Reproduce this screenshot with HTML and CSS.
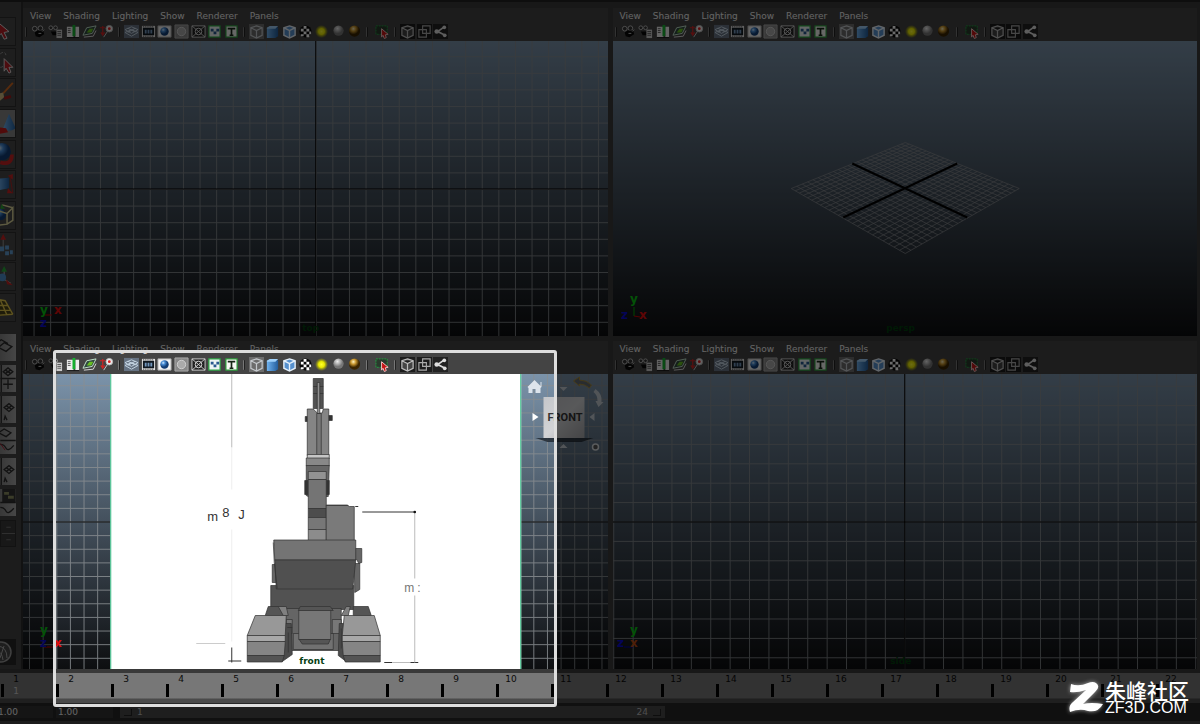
FILE: index.html
```html
<!DOCTYPE html>
<html lang="en">
<head>
<meta charset="utf-8">
<title>Four view layout</title>
<link rel="stylesheet" href="styles.css">
</head>
<body>
<svg class="defs" aria-hidden="true">
  <defs>
    <linearGradient id="blue" x2="1" y2="0"><stop offset="0" stop-color="#6fb2ef"/><stop offset="1" stop-color="#225c9b"/></linearGradient>
    <radialGradient id="ballBlue" cx=".35" cy=".3"><stop offset="0" stop-color="#d5ecff"/><stop offset=".4" stop-color="#4a8fd8"/><stop offset="1" stop-color="#123d75"/></radialGradient>
    <radialGradient id="ballGrey" cx=".4" cy=".3"><stop offset="0" stop-color="#eee"/><stop offset="1" stop-color="#777"/></radialGradient>
    <radialGradient id="ballGold" cx=".4" cy=".3"><stop offset="0" stop-color="#fff2c0"/><stop offset=".45" stop-color="#c8962e"/><stop offset="1" stop-color="#3a2400"/></radialGradient>
    <radialGradient id="glow"><stop offset="0" stop-color="#ffff30"/><stop offset=".45" stop-color="#e8e800"/><stop offset="1" stop-color="#b0b000" stop-opacity="0"/></radialGradient>
    <linearGradient id="face" x2="1" y2="1"><stop offset="0" stop-color="#c4c6ca"/><stop offset=".5" stop-color="#d2d3d6"/><stop offset="1" stop-color="#a4a5a8"/></linearGradient>
    <pattern id="gridTop" width="16.6" height="16.6" patternUnits="userSpaceOnUse"><path d="M0 .5H17M.5 0V17" class="grid"/></pattern>
    <pattern id="gridFront" width="13.63" height="13.63" patternUnits="userSpaceOnUse"><path d="M0 .5H14M.5 0V14" class="grid"/></pattern>
    <pattern id="gridSide" width="19.4" height="19.4" patternUnits="userSpaceOnUse"><path d="M0 .5H20M.5 0V20" class="grid"/></pattern>
  </defs>
  <symbol id="i-cam" viewBox="0 0 16 16"><circle cx="4" cy="5" r="2.5" fill="#333" stroke="#bbb"/><circle cx="10" cy="4.500" r="2.500" fill="#333" stroke="#bbb"/><path d="M4 9l3-2h6l1 4-5 3-4-1z" fill="#080808"/><path d="M8 10h3M12 8l2-2" stroke="#ccc"/></symbol>
  <symbol id="i-camlist" viewBox="0 0 16 16"><circle cx="3" cy="4" r="2" fill="#333" stroke="#bbb"/><circle cx="8" cy="4" r="2" fill="#333" stroke="#bbb"/><path d="M3 8h6v4H5z" fill="#080808"/><path d="M9 6h6v9H9z" fill="#ccc"/><path d="M10 8h4M10 10h4M10 12h4" stroke="#555"/></symbol>
  <symbol id="i-book" viewBox="0 0 16 16"><path d="M2 3h7v11H2zM11 3h4v11h-4z" fill="#eee"/><path d="M3 5h3M3 7h3M3 9h3" stroke="#555"/><path d="M8 1h3v12H8z" fill="#16b030"/><path d="M2 14.500h13" stroke="#111"/></symbol>
  <symbol id="i-plane" viewBox="0 0 16 16"><path d="M1 12L5 4l10-2-4 8z" fill="#304a40" stroke="#c8e8d0"/><path d="M2 14l10-1 3-6" fill="none" stroke="#ddd"/><path d="M5 9l3-4h4l-2 4z" fill="#68c020"/></symbol>
  <symbol id="i-pan" viewBox="0 0 16 16"><path d="M4 2v9M1 4h6M2 9l2 3 2-3" fill="none" stroke="#d02222" stroke-width="1.300"/><circle cx="11" cy="5" r="3.500" fill="#eee" stroke="#bbb"/><circle cx="11" cy="5" r="1.500" fill="#d22"/><path d="M9 8l-4 6" stroke="#ccc"/></symbol>
  <symbol id="i-grid" viewBox="0 0 16 16"><path d="M0 1h16v14H0z" fill="#667383"/><path d="M1 6l7-3 7 3-7 4zM1 9l7-3 7 3-7 4zM4 4.500l8 4M12 4.500L4 9" fill="none" stroke="#c8d8e5"/></symbol>
  <symbol id="i-film" viewBox="0 0 16 16"><path d="M1 2h14v12H1z" fill="#e6e6e6"/><path d="M2 4h12v8H2z" fill="#101820"/><path d="M4 6h2v4H4zM7 6h2v4H7zM10 6h2v4h-2z" fill="#7296bc"/><path d="M2 3h12M2 13h12" stroke="#222" stroke-dasharray="1 1"/></symbol>
  <symbol id="i-res" viewBox="0 0 16 16"><path d="M1 2h14v12H1z" fill="#f4f4f4" stroke="#aaa"/><circle cx="8" cy="8" r="4.500" fill="url(#ballBlue)"/></symbol>
  <symbol id="i-mask" viewBox="0 0 16 16"><path d="M1 1h14v14H1z" fill="#888" stroke="#aaa"/><circle cx="8" cy="8" r="4.500" fill="#aaa" stroke="#d0d0d0"/></symbol>
  <symbol id="i-field" viewBox="0 0 16 16"><path d="M1 2h14v12H1z" fill="#222" stroke="#ccc"/><path d="M1 2l14 12M15 2L1 14" stroke="#ccc"/><circle cx="8" cy="8" r="3.500" fill="none" stroke="#ddd"/></symbol>
  <symbol id="i-safe" viewBox="0 0 16 16"><path d="M2 2h12v12H2z" fill="#edf4f4" stroke="#2aa342" stroke-width="1.300"/><path d="M4 5h3v3H4zM7 8h3v3H7zM10 5h3v3h-3z" fill="#28598f"/></symbol>
  <symbol id="i-title" viewBox="0 0 16 16"><path d="M2 2h12v12H2z" fill="#f6f8f4" stroke="#2a9838" stroke-width="1.300"/><path d="M4 5h8M8 5v7M6 12h4" stroke="#152515" stroke-width="1.800"/></symbol>
  <symbol id="i-wire" viewBox="0 0 16 16"><path d="M0 0h16v16H0z" fill="#777" opacity=".8"/><path d="M8 2l6 2v8l-6 3-6-3V4zM2 4l6 3 6-3M8 7v8" fill="none" stroke="#c4c8cc" stroke-width="1.300"/></symbol>
  <symbol id="i-solid" viewBox="0 0 16 16"><path d="M2 4l9-2 3 2v9l-3 2H2z" fill="url(#blue)"/><path d="M2 4l3-2h9l-3 3H2z" fill="#9fd0fa"/></symbol>
  <symbol id="i-wiresolid" viewBox="0 0 16 16"><path d="M8 2l6 2v8l-6 3-6-3V4z" fill="#5691cf" stroke="#e6f1fb" stroke-width="1.500"/><path d="M2 4l6 3 6-3M8 7v8" fill="none" stroke="#e6f1fb" stroke-width="1.500"/></symbol>
  <symbol id="i-check" viewBox="0 0 16 16"><circle cx="8" cy="8" r="6.500" fill="#070707"/><path d="M6 2h3v3H6zM3 5h3v3H3zM9 5h3v3H9zM6 8h3v3H6zM12 8h2v3h-2zM3 11h3v2H3zM9 11h3v3H9z" fill="#fff"/></symbol>
  <symbol id="i-light" viewBox="0 0 16 16"><circle cx="8" cy="8" r="7" fill="url(#glow)"/></symbol>
  <symbol id="i-grey" viewBox="0 0 16 16"><circle cx="8" cy="7" r="5.500" fill="url(#ballGrey)"/></symbol>
  <symbol id="i-gold" viewBox="0 0 16 16"><circle cx="8" cy="7.500" r="6" fill="url(#ballGold)"/></symbol>
  <symbol id="i-isolate" viewBox="0 0 16 16"><path d="M1 2h12v9H1z" fill="#2a3a2d" stroke="#20a040" stroke-dasharray="2 1"/><path d="M7 5l7 6-3 .5 1 3-2 1-1.500-3.500L7 14z" fill="#c51616" stroke="#f3c3c3"/></symbol>
  <symbol id="i-xray" viewBox="0 0 16 16"><path d="M0 0h16v16H0z" fill="#1c1c1c"/><path d="M8 2l6 2v8l-6 3-6-3V4zM2 4l6 3 6-3M8 7v8" fill="#444" stroke="#bbb" stroke-width="1.300"/></symbol>
  <symbol id="i-copy" viewBox="0 0 16 16"><path d="M0 0h16v16H0z" fill="#1c1c1c"/><path d="M6 2h8v8H6zM2 6h8v8H2z" fill="none" stroke="#aaa" stroke-width="1.200"/></symbol>
  <symbol id="i-share" viewBox="0 0 16 16"><path d="M0 0h16v16H0z" fill="#222"/><path d="M12 3L5 8l8 4" fill="none" stroke="#ddd" stroke-width="1.800"/><circle cx="4" cy="8" r="2.500" fill="#ddd"/><circle cx="12" cy="3.500" r="2" fill="#ddd"/><circle cx="12.500" cy="12" r="2" fill="#ddd"/></symbol>
</svg>

<main class="app">
  <div class="work">
    <aside class="toolbox">
      <div class="tools">
        <button aria-label="Select"><svg viewBox="0 0 16 28"><path d="M-3 4L9 14l-5 1 3 6-3 1-3-6-4 4z" fill="#b81f26" stroke="#ddd"/></svg></button>
        <button aria-label="Lasso"><svg viewBox="0 0 16 28"><path d="M0 5q5-4 6 2M0 19q3 0 4-3" fill="none" stroke="#999" stroke-dasharray="3 2"/><path d="M4 10l9 9-4 0 2 5-2 1-3-5-2 3z" fill="#b81f26" stroke="#ddd"/></svg></button>
        <button aria-label="Paint"><svg viewBox="0 0 16 28"><path d="M13 4L3 15" stroke="#d06820" stroke-width="2"/><path d="M-2 15l5-1 1 5-5 4z" fill="#d0ba80"/><path d="M4 20l7-2" stroke="#a01818" stroke-width="3"/></svg></button>
        <button class="on" aria-label="Move"><svg viewBox="0 0 16 28"><path d="M9 4l7 15q-7 5-13 0z" fill="url(#blue)"/><path d="M-2 18l8 1 2 4-10 2z" fill="#c01c1c"/></svg></button>
        <button aria-label="Rotate"><svg viewBox="0 0 16 28"><path d="M0 22q12 4 12-8" fill="none" stroke="#c82222" stroke-width="4"/><circle cx="2" cy="11" r="9" fill="url(#ballBlue)"/></svg></button>
        <button aria-label="Scale"><svg viewBox="0 0 16 28"><path d="M-2 8l11-1v11l-11 2z" fill="url(#blue)"/><path d="M8 5l5-2v6zM8 18l5 5H7z" fill="#c82222"/><path d="M10 5l3 18" stroke="#a22"/></svg></button>
        <button aria-label="Universal"><svg viewBox="0 0 16 28"><circle cx="0" cy="13" r="6" fill="url(#ballBlue)"/><path d="M-2 9l9 3v11l-9 1M7 12l6-6v13l-6 4M13 6L2 3" fill="none" stroke="#ded69a" stroke-width="1.500"/><path d="M1 2l4 5H0z" fill="#2ba034"/></svg></button>
        <button aria-label="Soft modify"><svg viewBox="0 0 16 28"><path d="M3 1l3 6H0z" fill="#c82222"/><path d="M3 7v8" stroke="#999"/><path d="M-1 14h5v5h-5zM5 13h4v4H5zM5 19h4v4H5zM10 18h3v4h-3z" fill="#609bd0"/></svg></button>
        <button aria-label="Manipulator"><svg viewBox="0 0 16 28"><path d="M4 3l3 6H1z" fill="#27a838"/><path d="M4 9v8l7 4" stroke="#bbb" fill="none"/><circle cx="2" cy="15" r="4" fill="#4c8fca"/><path d="M6 17l7 6-6-1z" fill="#c82222"/></svg></button>
        <button aria-label="Grid tool"><svg viewBox="0 0 16 28"><path d="M-5 5l10 2 8 14-13 2z" fill="#4a441a"/><path d="M-5 5l10 2 8 14M-4 12l12 0M-2 17l13 0M0 6l7 16M-2 22l15-1" fill="none" stroke="#e0c64a" stroke-width="1.500"/></svg></button>
      </div>
      <div class="layouts">
        <button class="lit tall" aria-label="Single view"><svg viewBox="0 0 16 28"><path d="M-2 14l6-5 8 4-6 5zM-5 10l6-4 7 4" class="ink"/></svg></button>
        <button class="lit split" aria-label="Four view"><svg viewBox="0 0 16 28"><path d="M3 7l5-4 5 4-5 4zM5 5l6 4M11 5L5 9M3 20h10M8 15v10M0 14h16M1 0v28" class="ink"/></svg></button>
        <button class="lit tall" aria-label="Side view"><svg viewBox="0 0 16 28"><path d="M4 12l5-4 5 4-5 4zM6 10l6 4M12 10l-6 4M4 25l1-4 2 4M1 0v28" class="ink"/></svg></button>
        <button class="lit tall" aria-label="Graph view"><svg viewBox="0 0 16 28"><path d="M-2 6l6-4 7 4-5 4zM0 14h16M0 18q4 0 6 4t8-3" class="ink"/><path d="M0 17l5 7" stroke="#a23"/></svg></button>
        <button class="lit tall" aria-label="Outliner view"><svg viewBox="0 0 16 28"><path d="M4 12l5-4 5 4-5 4zM6 10l6 4M12 10l-6 4M4 25l1-4 2 4M1 0v28" class="ink"/></svg></button>
        <button class="lit tall" aria-label="Hypershade view"><svg viewBox="0 0 16 28"><path d="M2 0h14v14H2z" fill="#333"/><path d="M4 3h5v3H4zM8 7h6v3H8z" fill="#8c9062"/><path d="M0 14h16M0 19q4 0 6 4t8-3" class="ink"/></svg></button>
        <button class="dark" aria-label="More layouts"><svg viewBox="0 0 16 28"><path d="M5 7h5M5 21h5M0 14h16" stroke="#777"/></svg></button>
      </div>
      <button class="brand" aria-label="About"><svg viewBox="0 0 16 26"><circle cx="1" cy="13" r="10" fill="#484848" stroke="#999" stroke-width="1.500"/><path d="M-2 7q9 1 9 12M-3 12q5 1 6 9M4 7L0 19" fill="none" stroke="#aaa"/></svg></button>
    </aside>

    <div class="views">
      <section class="panel" aria-label="top view">
        <svg class="viewport">
          <svg x="50%" y="50%" class="anchor"><rect x="-1500" y="-1500" width="3000" height="3000" fill="url(#gridTop)" transform="translate(.5 .5)"/><path d="M-1500 .5H1500M.5-1500V1500" class="axis"/><text x="-13" y="142" class="name">top</text></svg>
          <svg y="100%" class="anchor gizmo"><path d="M21-21h8" stroke="#c00"/><text x="17" y="-22" class="gy">y</text><text x="31" y="-22" class="gx">x</text><text x="17" y="-9" class="gz">z</text></svg>
        </svg>
      </section>
      <section class="panel" aria-label="perspective view">
        <svg class="viewport">
          <svg x="50%" y="50%" class="anchor"><path id="floor" class="floor"/><path d="M-53-25L62 29M52-25L-62 29" class="axis thick"/><text x="-19" y="142" class="name">persp</text></svg>
          <svg y="100%" class="anchor gizmo"><path d="M21-29v9" stroke="#0a0"/><path d="M21-20l6 1" stroke="#c00"/><text x="17" y="-33" class="gy">y</text><text x="8" y="-17" class="gz">z</text><text x="26" y="-17" class="gx">x</text></svg>
        </svg>
      </section>
      <section class="panel" aria-label="front view">
        <svg class="viewport">
          <svg x="50%" y="50%" class="anchor">
            <rect x="-1500" y="-1500" width="3000" height="3000" fill="url(#gridFront)"/><path d="M-1500 .5H1500M.5-1500V1500" class="axis"/>
            <g transform="translate(-315 -522)">
              <path d="M110 374h411v297H110z" fill="#fff"/><path d="M110.500 374v297M520.500 374v297" stroke="#35bd85"/>
              <g class="measure">
                <path d="M231.500 374v74" stroke="#bbb"/><path d="M231.500 448v42M231.500 530v112" stroke="#eee"/><path d="M196 644h29" stroke="#ccc"/><path d="M231.500 648v15M228 661.500h13M362 512.500h53M384 663h8M410 663h8M355 507h3" stroke="#333"/><path d="M414.500 513v66M414.500 596v67M392 663h18" stroke="#bbb"/><circle cx="414.500" cy="512.500" r="1.300" fill="#111"/>
                <text x="207" y="521">m</text><text x="222" y="517">8</text><text x="238" y="519">J</text><text x="404" y="592" class="small">m</text><text x="417" y="592" class="small">:</text>
              </g>
              <g class="model">
                <path d="M313 379h10v30h-10z" fill="#525252"/><path d="M313 387h10M313 394h10"/>
                <path d="M305 417h4v5h-4zM328 416h4v5h-4z" fill="#333"/>
                <path d="M307 409.500h6l4 4h5l1-4h5.500V456H307z" fill="#858585"/><path d="M317 383h2.500v31H317z" fill="#929292"/><path d="M316.500 414h4.500v43h-4.500z" fill="#777"/>
                <path d="M307 455h22v4h-22z" fill="#c6c6c6" stroke="none"/><path d="M306 458.500h23v8h-23z" fill="#888"/><path d="M306 466h23l-1 31h-20l-2-1z" fill="#666"/>
                <path d="M304.500 481h3v14h-3zM326 481h3v14h-3z" fill="#333"/>
                <path d="M308 472h18v8h-18z" fill="#929292"/><path d="M308 480h18v29h-18z" fill="#747474"/><path d="M308 509h18v9h-18z" fill="#4d4d4d"/><path d="M308 518h18v12h-18z" fill="#777"/><path d="M308 530h18v11h-18z" fill="#8c8c8c"/>
                <path d="M326 505.500h21l2 1.500h5v34h-28z" fill="#7a7a7a"/><path d="M326 506h22" stroke="#333" stroke-width="2"/>
                <path d="M355 549h6.500v14l-3 1-2-4h-2zM354 564h5.500v26l-5 3zM272 565h4v18h-4z" fill="#666"/>
                <path d="M270.500 586h83v24h-83z" fill="#525252"/><path d="M273.500 540.500h82v20h-81z" fill="#747474"/><path d="M274.500 560.500h81l-3 29H276z" fill="#505050"/><path d="M273 543l1 20 3 26" fill="none" stroke="#222" stroke-width="2"/>
                <path d="M268 607h16v9h-19zM353 607h15l3 9h-18z" fill="#555"/><path d="M286 609h55v42h-55z" fill="#656565"/><path d="M286 620h6v14h-6zM332 620h9v14h-9z" fill="#777"/><path d="M293 634h40v16h-40z" fill="#717171"/>
                <path d="M278 607l5 9h5l-2-9zM346 607l-5 9h7l2-9z" fill="#808080"/>
                <path d="M300 607h30l3 4h-35z" fill="#555"/><path d="M298.500 611h32v29h-32z" fill="#777"/><path d="M299 640h31l-2 4.500h-26z" fill="#555"/>
                <path d="M285 624h6l1 31-10 7zM339 624h5l2 38-8-6z" fill="#4b4b4b"/><path d="M287 628h5M288 633v20M341 629v20" stroke="#bbb"/>
                <path d="M255 616h31l-1 20h-38z" fill="#989898"/><path d="M247 636h38v6h-38z" fill="#a8a8a8"/><path d="M247 642h38l-1 14h-37z" fill="#858585"/><path d="M247 656h37l-2 6.500h-35z" fill="#545454"/>
                <path d="M344 616h30l6 20h-38z" fill="#989898"/><path d="M342 636h38v6h-38z" fill="#a8a8a8"/><path d="M342 642h38v14h-37z" fill="#858585"/><path d="M343 656h37v6.500h-35z" fill="#545454"/>
              </g>
              <text x="299" y="664" class="name bright">front</text>
            </g>
          </svg>
          <svg y="100%" class="anchor gizmo"><path d="M21-22h10" stroke="#c00"/><text x="17" y="-35" class="gy">y</text><text x="17" y="-22" class="gz">z</text><text x="31" y="-22" class="gx">x</text></svg>
          <svg x="100%" class="anchor cube"><g transform="translate(-608 -374)">
            <path d="M528 387l7-7 6 6v-4h1v5l-1 1v5h-5v-4h-3v4h-4v-5z" fill="#dde4ec"/>
            <path d="M533 413l6 4-6 4z" fill="#fff"/><path d="M595 413l-5 4 5 4zM560 387h8l-4 4zM560 448h8l-4-4z" fill="#c4cad1"/>
            <path d="M536 438h58l-12 4h-34z" fill="#1b242d" opacity=".8"/><path d="M544 397h41v41h-41z" fill="url(#face)"/>
            <text x="548" y="421" class="front">FRONT</text>
            <path d="M574 381l6-4v3q7 0 12 5l-2 3q-5-4-10-4v2z" fill="#626a70" stroke="#a58a3c"/><path d="M596 389q7 5 6 13h2l-5 5-3-6h2q0-6-4-9z" fill="#c0c8d0"/>
            <circle cx="596" cy="447" r="3" fill="#555" stroke="#d4d8dc" stroke-width="1.500"/>
          </g></svg>
        </svg>
      </section>
      <section class="panel" aria-label="side view">
        <svg class="viewport">
          <svg x="50%" y="50%" class="anchor"><rect x="-1500" y="-1500" width="3000" height="3000" fill="url(#gridSide)" transform="translate(-1 0)"/><path d="M-1500 .5H1500M-.5-1500V1500" class="axis"/><text x="-15" y="142" class="name">side</text></svg>
          <svg y="100%" class="anchor gizmo"><path d="M11-22h9" stroke="#00a"/><text x="17" y="-35" class="gy">y</text><text x="4" y="-22" class="gz">z</text><text x="17" y="-22" class="gx orange">x</text></svg>
        </svg>
      </section>
    </div>
  </div>

  <footer>
    <div class="ruler"><ol class="frames" id="frames"></ol></div>
    <div class="range">
      <input class="num" aria-label="Animation start" value="1.00">
      <input class="num second" aria-label="Playback start" value="1.00">
      <div class="slider"><i></i><span>1</span><span class="end">24</span><i></i></div>
    </div>
  </footer>

  <div class="spotlight"></div>
  <div class="watermark">
    <svg viewBox="0 0 38 36" aria-hidden="true"><path d="M4 5q8 3 17-1 5-2 8 0 5 4-1 9L16 25q8-2 20 0-5 9-15 7-8-3-18 1-2-6 3-10L19 11Q10 14 3 13z"/></svg>
    <div><strong lang="zh">朱峰社区</strong><span>ZF3D.COM</span></div>
  </div>
</main>

<template id="header">
  <header>
    <nav><button>View</button><button>Shading</button><button>Lighting</button><button>Show</button><button>Renderer</button><button>Panels</button></nav>
    <div class="bar"></div>
  </header>
</template>
<script src="app.js"></script>
</body>
</html>
```
FILE: styles.css
```css
* { box-sizing: border-box; }
body { margin: 0; background: #444; font: 9px/12px "DejaVu Sans", sans-serif; color: #eee; }
button, input { font: inherit; color: inherit; border: 0; margin: 0; padding: 0; background: none; }
.defs { position: absolute; width: 0; height: 0; }
.app { position: relative; height: 100vh; min-height: 700px; display: flex; flex-direction: column; overflow: hidden; }
.work { flex: 1; min-height: 0; display: flex; border-top: 2px solid #222; }

.toolbox { width: 23px; padding-top: 15px; border-right: 2px solid #2c2c2c; display: flex; flex-direction: column; align-items: flex-start; }
.toolbox button { display: block; width: 16px; overflow: hidden; }
.toolbox svg { display: block; width: 16px; height: 100%; }
.tools { height: 305px; display: flex; flex-direction: column; justify-content: space-between; }
.tools button { height: 29px; background: #484848; border: 1px solid #2e2e2e; border-left: 0; }
.tools .on { background: #858585; }
.layouts { margin-top: 12px; display: flex; flex-direction: column; gap: 4px; }
.layouts button { height: 27px; }
.lit { background: linear-gradient(90deg, #858585, #a8a8a8); }
.dark { background: #3b3b3b; border: 1px solid #2c2c2c; }
.ink { fill: none; stroke: #2b2b2b; stroke-width: 1.4; }
.toolbox .brand { height: 26px; margin-top: auto; margin-bottom: 4px; background: #282828; }

.views { flex: 1; min-width: 0; display: grid; grid-template: 1fr 1fr / 1fr 1fr; gap: 5px; padding: 6px 3px 0 0; background: #3a3a3a; }
.panel { min-width: 0; min-height: 0; display: flex; flex-direction: column; background: #444; }
header { height: 33px; flex: none; }
nav { height: 16px; display: flex; align-items: center; gap: 12px; padding-left: 7px; }
nav button { line-height: 16px; }
.bar { height: 15px; display: flex; align-items: center; gap: 4px; padding-left: 2px; }
.sep { width: 2px; height: 10px; border-left: 1px solid #777; border-right: 1px solid #222; border-radius: 1px; }
.group { display: flex; justify-content: space-between; }
.g1 { width: 83px; } .g2 { width: 115px; } .g3 { width: 113px; } .g4 { width: 18px; justify-content: flex-end; } .g5 { width: 48px; }
.group button { width: 15px; height: 15px; }
.group svg { display: block; width: 15px; height: 15px; }
.viewport { display: block; width: 100%; flex: 1; min-height: 0; background: linear-gradient(#7b93aa, #0d0e10); overflow: hidden; }
.anchor { overflow: visible; }
.grid { fill: none; stroke: #898d91; stroke-width: 1; opacity: .85; shape-rendering: crispEdges; }
.axis { fill: none; stroke: #000; }
.thick { stroke-width: 2; }
.floor { fill: none; stroke: #898d90; stroke-width: .7; }
.name { font: bold 9px "DejaVu Sans", sans-serif; fill: #003c0c; }
.bright { fill: #073f13; }
.gizmo text { font: bold 12px "DejaVu Sans", sans-serif; }
.gy { fill: #08c512; } .gx { fill: #e00c0c; } .gz { fill: #0b0bd0; } .gizmo .orange { fill: #b94b12; }
.front { font: bold 11px Roboto, sans-serif; fill: #333; }
.model path { stroke: #303030; stroke-width: .7; }
.measure { fill: none; }
.measure text { font: 13px "Liberation Sans", sans-serif; fill: #333; }
.measure .small { font-size: 12px; fill: #777; }

footer { flex: none; }
.ruler { height: 37px; border-top: 4px solid #393939; background: linear-gradient(#777 0 25px, #4a4a4a 26px); border-bottom: 3px solid #262626; overflow: hidden; }
.frames { display: flex; margin: 0; padding: 0; list-style: none; }
.frames li { flex: 0 0 55px; height: 25px; position: relative; color: #0a0a0a; border-left: 1px solid transparent; }
.frames li::after { content: ""; display: block; width: 3px; height: 13px; background: #000; margin-top: -1px; }
.frames span { display: block; width: 30px; text-align: center; }
.frames .now { position: absolute; left: 0; top: 12px; color: #ccc; }
.range { height: 18px; padding-bottom: 3px; display: flex; background: #282828; border-bottom: 3px solid #444; }
.num { width: 53px; padding: 0; text-indent: -2px; background: #323232; }
.second { margin-left: 3px; width: 57px; text-indent: 2px; }
.slider { flex: 0 1 545px; margin-left: 7px; display: flex; align-items: center; gap: 5px; padding: 0 4px; background: #484848; }
.slider i { width: 8px; height: 7px; border-right: 1px solid #222; border-bottom: 1px solid #222; }
.slider span { color: #bbb; }
.slider .end { margin-left: auto; }

.spotlight { position: absolute; left: 53px; top: 350px; width: 504px; height: 357px; border: 3px solid #dedede; border-radius: 3px; box-shadow: 0 0 0 2000px rgba(0, 0, 0, .58); pointer-events: none; }
.watermark { position: absolute; right: 11px; bottom: 9px; display: flex; align-items: center; color: #fff; }
.watermark svg { width: 38px; height: 36px; fill: #fff; filter: drop-shadow(0 0 2px #aaa); }
.watermark div { display: flex; flex-direction: column; }
.watermark strong { font: 500 21px/21px "Noto Sans CJK SC", sans-serif; }
.watermark span { font: 16px/13px "Liberation Sans", sans-serif; }
```
FILE: app.js
```js
const groups = [
  ["cam", "camlist", "book", "plane", "pan"],
  ["grid", "film", "res", "mask", "field", "safe", "title"],
  ["wire", "solid", "wiresolid", "check", "light", "grey", "gold"],
  ["isolate"],
  ["xray", "copy", "share"]
];
const bar = groups.map((names, i) =>
  `<span class="sep"></span><div class="group g${i + 1}">` +
  names.map(n => `<button aria-label="${n}"><svg><use href="#i-${n}"/></svg></button>`).join("") +
  "</div>").join("");

document.querySelectorAll(".panel").forEach(panel => {
  const head = document.getElementById("header").content.cloneNode(true);
  head.querySelector(".bar").innerHTML = bar;
  panel.prepend(head);
});

// Floor grid of the perspective view: the unit square projected on four corners.
const [p0, p1, p2, p3] = [[0, -46], [114, 0], [0, 65], [-114, 0]];
const dx1 = p1[0] - p2[0], dx2 = p3[0] - p2[0], sx = p0[0] - p1[0] + p2[0] - p3[0];
const dy1 = p1[1] - p2[1], dy2 = p3[1] - p2[1], sy = p0[1] - p1[1] + p2[1] - p3[1];
const det = dx1 * dy2 - dx2 * dy1;
const g = (sx * dy2 - dx2 * sy) / det, h = (dx1 * sy - sx * dy1) / det;
const project = (u, v) => {
  const w = g * u + h * v + 1;
  return [0, 1].map(k => (((p1[k] - p0[k] + g * p1[k]) * u + (p3[k] - p0[k] + h * p3[k]) * v + p0[k]) / w).toFixed(2)).join(" ");
};
let d = "";
for (let i = 0; i <= 24; i++) {
  const t = i / 24;
  d += `M${project(t, 0)}L${project(t, 1)}M${project(0, t)}L${project(1, t)}`;
}
document.getElementById("floor").setAttribute("d", d);

document.getElementById("frames").innerHTML = Array.from({ length: 22 }, (_, i) =>
  `<li><span>${i + 1}</span>${i ? "" : '<span class="now">1</span>'}</li>`).join("");
```
